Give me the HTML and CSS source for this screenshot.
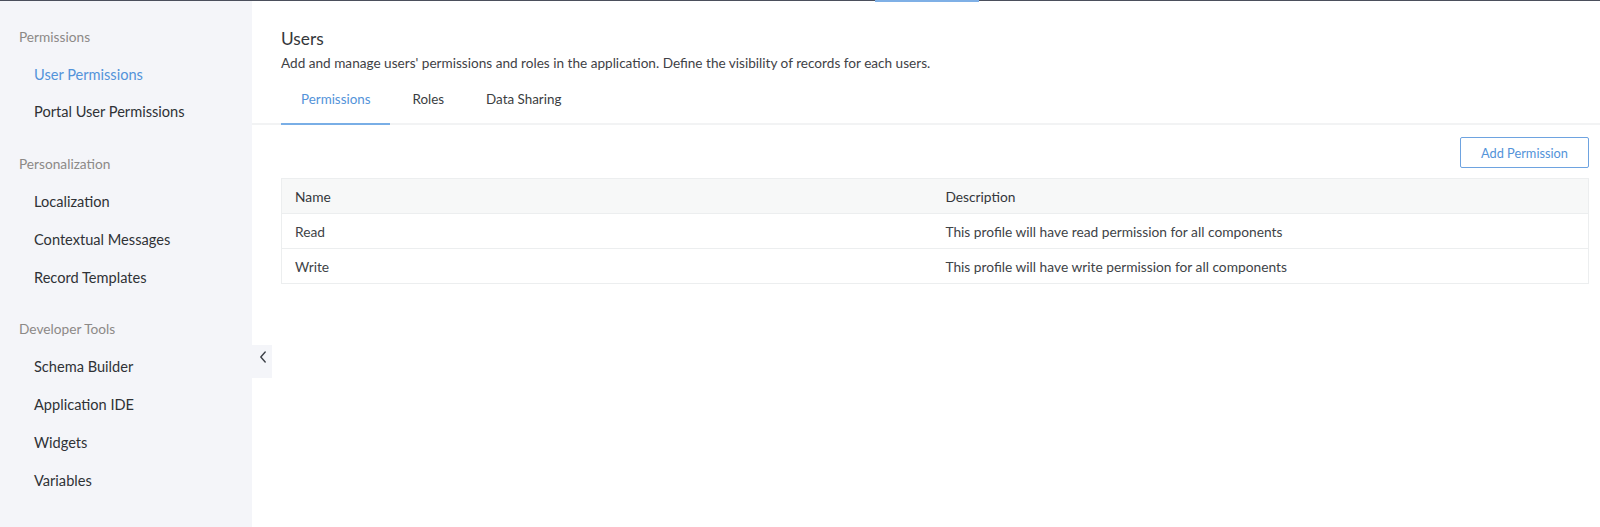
FILE: index.html
```html
<!DOCTYPE html>
<html>
<head>
<meta charset="utf-8">
<link rel="stylesheet" href="styles.css">
</head>
<body>
<div class="topline"><span class="tl-dark tl-left"></span><span class="tl-blue"></span><span class="tl-dark tl-right"></span></div>
<div class="app">
  <aside class="sidebar">
    <div class="section">
      <div class="section-title">Permissions</div>
      <a class="item active">User Permissions</a>
      <a class="item">Portal User Permissions</a>
    </div>
    <div class="section">
      <div class="section-title">Personalization</div>
      <a class="item">Localization</a>
      <a class="item">Contextual Messages</a>
      <a class="item">Record Templates</a>
    </div>
    <div class="section">
      <div class="section-title">Developer Tools</div>
      <a class="item">Schema Builder</a>
      <a class="item">Application IDE</a>
      <a class="item">Widgets</a>
      <a class="item">Variables</a>
    </div>
    <button class="collapse" aria-label="Collapse">
      <svg width="8" height="12" viewBox="0 0 8 12"><path d="M6.2 1 L1.8 6 L6.2 11" fill="none" stroke="#3c4047" stroke-width="1.4" stroke-linecap="round" stroke-linejoin="round"/></svg>
    </button>
  </aside>
  <main class="main">
    <header class="page-head">
      <h1 class="title">Users</h1>
      <p class="desc">Add and manage users' permissions and roles in the application. Define the visibility of records for each users.</p>
      <nav class="tabs">
        <a class="tab active">Permissions</a>
        <a class="tab">Roles</a>
        <a class="tab">Data Sharing</a>
      </nav>
    </header>
    <section class="content">
      <div class="toolbar">
        <button class="btn">Add Permission</button>
      </div>
      <table class="grid">
        <colgroup><col class="col-name"><col></colgroup>
        <thead>
          <tr><th>Name</th><th>Description</th></tr>
        </thead>
        <tbody>
          <tr><td>Read</td><td>This profile will have read permission for all components</td></tr>
          <tr><td>Write</td><td>This profile will have write permission for all components</td></tr>
        </tbody>
      </table>
    </section>
  </main>
</div>
</body>
</html>
```

FILE: styles.css
```css
* { box-sizing: border-box; }
html, body {
  margin: 0;
  padding: 0;
  height: 100%;
  background: #ffffff;
  font-family: Lato, "Open Sans", "Liberation Sans", sans-serif;
  color: #333539;
}
.topline {
  display: flex;
  height: 1px;
}
.tl-dark { background: #4b4f5c; height: 1px; }
.tl-left { width: 875px; }
.tl-blue { width: 104px; height: 2px; background: #7fb0e6; }
.tl-right { flex: 1; }

.app {
  display: flex;
  height: 526px;
}
.sidebar {
  position: relative;
  width: 252px;
  flex: none;
  background: #f4f5f9;
  padding-top: 16.5px;
}
.section + .section { margin-top: 14px; }
.section-title {
  height: 38px;
  line-height: 38px;
  padding-left: 19px;
  font-size: 13.7px;
  color: #8c8987;
}
.item {
  display: block;
  height: 37.75px;
  line-height: 37.75px;
  padding-left: 34px;
  font-size: 14.6px;
  color: #2f3236;
  cursor: pointer;
}
.item.active { color: #5393d9; }

.collapse {
  position: absolute;
  top: 344px;
  right: -20px;
  width: 20px;
  height: 33px;
  border: 0;
  padding: 6px 0 0 1px;
  background: #f4f5f9;
  display: flex;
  align-items: flex-start;
  justify-content: center;
}

.main {
  flex: 1;
  min-width: 0;
}
.page-head {
  padding: 27px 0 0 29px;
  border-bottom: 2px solid #f2f3f4;
}
.title {
  margin: 0;
  font-size: 17.3px;
  font-weight: 400;
  line-height: 22px;
  color: #34373b;
}
.desc {
  margin: 3px 0 0;
  font-size: 13.6px;
  line-height: 20px;
  color: #3f4246;
}
.tabs {
  display: flex;
  margin-top: 11px;
}
.tab {
  display: block;
  padding: 0 19px 0 20px;
  height: 41px;
  line-height: 30px;
  font-size: 13.4px;
  color: #3a3d41;
  margin-right: 3px;
  margin-bottom: -2px;
  border-bottom: 2px solid transparent;
  cursor: pointer;
}
.tab.active {
  color: #5393d9;
  border-bottom-color: #79aee6;
}

.content {
  padding: 12px 11px 0 29px;
}
.toolbar {
  display: flex;
  justify-content: flex-end;
}
.btn {
  height: 31px;
  width: 129px;
  border: 1px solid #6ea3e0;
  border-radius: 2px;
  background: #fff;
  color: #5393d9;
  font-family: inherit;
  font-size: 12.8px;
  padding: 0;
}
.grid {
  margin-top: 10px;
  width: 100%;
  border-collapse: collapse;
  table-layout: fixed;
  border: 1px solid #eceeef;
  font-size: 13.75px;
}
.col-name { width: 49.8%; }
.grid th, .grid td {
  height: 35px;
  padding: 0 13px;
  text-align: left;
  color: #404347;
  border-bottom: 1px solid #eceeef;
}
.grid th {
  font-weight: 400;
  color: #34373b;
  background: #f7f8f8;
}
```
